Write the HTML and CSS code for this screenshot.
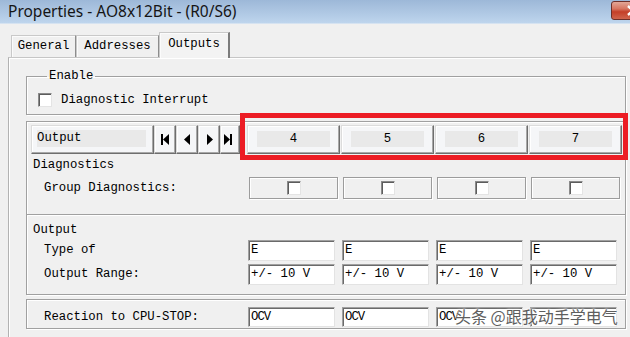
FILE: index.html
```html
<!DOCTYPE html>
<html lang="en">
<head>
  <meta charset="UTF-8" />
  <title>Properties - AO8x12Bit - (R0/S6)</title>
  <link rel="stylesheet" href="styles.css">
</head>
<body>
  <div class="titlebar">
    <span class="title">Properties - AO8x12Bit - (R0/S6)</span>
    <div class="close">
      <svg width="12" height="11" viewBox="0 0 12 11"><path d="M1 1 L11 10 M11 1 L1 10" stroke="#fff" stroke-width="2.4"/></svg>
    </div>
  </div>

  <div class="tabs">
    <div class="tab tab-general">General</div>
    <div class="tab tab-addresses">Addresses</div>
    <div class="tab tab-outputs active">Outputs</div>
  </div>

  <div class="page">
    <fieldset class="enable">
      <legend>Enable</legend>
      <div class="check-row"><span class="check"></span>Diagnostic Interrupt</div>
    </fieldset>

    <div class="box box-a">
      <div class="row nav-row">
        <div class="label-area nav-area">
          <div class="btn output-btn"><span>Output</span></div>
          <div class="btn nav-btn"><svg width="8" height="11" viewBox="0 0 8 11"><rect x="0" y="0" width="2" height="11"/><path d="M8 0 L2 5.5 L8 11 Z"/></svg></div>
          <div class="btn nav-btn"><svg width="7" height="11" viewBox="0 0 7 11"><path d="M6 0 L0 5.5 L6 11 Z"/></svg></div>
          <div class="btn nav-btn"><svg width="7" height="11" viewBox="0 0 7 11"><path d="M1 0 L7 5.5 L1 11 Z"/></svg></div>
          <div class="btn nav-btn last"><svg width="8" height="11" viewBox="0 0 8 11"><path d="M0 0 L6 5.5 L0 11 Z"/><rect x="6" y="0" width="2" height="11"/></svg></div>
        </div>
        <div class="cell"><div class="btn col-btn"><span>4</span></div></div>
        <div class="cell"><div class="btn col-btn"><span>5</span></div></div>
        <div class="cell"><div class="btn col-btn"><span>6</span></div></div>
        <div class="cell"><div class="btn col-btn"><span>7</span></div></div>
      </div>

      <div class="heading">Diagnostics</div>
      <div class="row group-row">
        <div class="label-area sub">Group Diagnostics:</div>
        <div class="cell check-wrap"><div class="check-cell"><span class="check"></span></div></div>
        <div class="cell check-wrap"><div class="check-cell"><span class="check"></span></div></div>
        <div class="cell check-wrap"><div class="check-cell"><span class="check"></span></div></div>
        <div class="cell check-wrap"><div class="check-cell"><span class="check"></span></div></div>
      </div>
    </div>

    <div class="box box-b">
      <div class="heading">Output</div>
      <div class="row field-row">
        <div class="label-area sub">Type of</div>
        <div class="cell"><div class="field">E</div></div>
        <div class="cell"><div class="field">E</div></div>
        <div class="cell"><div class="field">E</div></div>
        <div class="cell"><div class="field">E</div></div>
      </div>
      <div class="row field-row">
        <div class="label-area sub">Output Range:</div>
        <div class="cell"><div class="field">+/- 10 V</div></div>
        <div class="cell"><div class="field">+/- 10 V</div></div>
        <div class="cell"><div class="field">+/- 10 V</div></div>
        <div class="cell"><div class="field">+/- 10 V</div></div>
      </div>
    </div>

    <div class="box box-c">
      <div class="row field-row short">
        <div class="label-area sub">Reaction to CPU-STOP:</div>
        <div class="cell"><div class="field narrow">OCV</div></div>
        <div class="cell"><div class="field narrow">OCV</div></div>
        <div class="cell"><div class="field narrow">OCV</div></div>
        <div class="cell"><div class="field narrow"></div></div>
      </div>
    </div>
  </div>

  <div class="highlight"></div>
  <div class="watermark">头条 @跟我动手学电气</div>
</body>
</html>
```

FILE: styles.css
```css
* {
  box-sizing: border-box;
}

body {
  margin: 0;
  width: 630px;
  height: 337px;
  overflow: hidden;
  position: relative;
  background: #f0f0f0;
  font-family: "Liberation Mono", "DejaVu Sans Mono", monospace;
  font-size: 12.3px;
  line-height: 15px;
  color: #000;
}

/* window title */
.titlebar {
  height: 24px;
  display: flex;
  align-items: center;
  padding-left: 8px;
  background: linear-gradient(#9db8d8, #bed5ed);
  border-bottom: 1px solid #d6e3f1;
}

.title {
  font-family: "Noto Sans", sans-serif;
  font-size: 15.5px;
  color: #151515;
}

.close {
  align-self: flex-start;
  margin: 1px -24px 0 auto;
  width: 43px;
  height: 19px;
  border: 1px solid #6d302a;
  border-radius: 3px;
  background: linear-gradient(#e2a797 0%, #d77560 40%, #c43f28 58%, #d0644c 100%);
  display: flex;
  align-items: center;
  justify-content: center;
}

/* tabs */
.tabs {
  height: 33px;
  display: flex;
  align-items: flex-end;
  padding-left: 11px;
}

.tab {
  height: 22px;
  display: flex;
  align-items: center;
  justify-content: center;
  background: #f0f0f0;
  border: 1px solid #c9c9c9;
  border-bottom: 0;
  border-right: 1px solid #8d8d8d;
  box-shadow: inset 1px 1px 0 #fbfbfb;
}

.tab-general { width: 65px; }
.tab-addresses { width: 83px; }

.tab-outputs {
  width: 71px;
}

.tab.active {
  height: 26px;
  margin-bottom: -1px;
  padding-bottom: 3px;
  position: relative;
  z-index: 1;
  background: #f3f3f3;
  border-right: 2px solid #7c7c7c;
}

/* tab page */
.page {
  height: 280px;
  margin-left: 8px;
  padding-left: 17px;
  border-top: 1px solid #c6c6c6;
  border-left: 1px solid #b2b2b2;
  box-shadow: inset 1px 1px 0 #fff;
}

.enable {
  width: 600px;
  margin: 11px 0 0;
  padding: 9px 11px 7px;
  border: 1px solid #a0a0a0;
  box-shadow: inset 1px 1px 0 #fff, 1px 1px 0 #fff;
}

.enable legend {
  margin-left: 9px;
  padding: 0 2px;
  line-height: 15px;
}

.check-row {
  height: 14px;
  display: flex;
  align-items: center;
  gap: 9px;
}

.check {
  width: 14px;
  height: 14px;
  flex: none;
  background: #fff;
  border: 1px solid;
  border-color: #8a8a8a #e4e4e4 #e4e4e4 #8a8a8a;
  box-shadow: inset 1px 1px 0 #5c5c5c;
}

.box {
  width: 600px;
  border: 1px solid #a0a0a0;
  box-shadow: inset 1px 1px 0 #fff, 1px 1px 0 #fff;
}

.box-a {
  margin-top: 6px;
  padding: 3px 0 15px;
}

.box-b {
  border-top: 0;
  padding: 8px 0 9px;
}

.box-c {
  margin-top: 4px;
  padding: 7px 0 1px;
}

.row {
  display: flex;
  align-items: center;
}

.label-area {
  width: 220px;
  flex: none;
}

.sub {
  padding-left: 17px;
}

.heading {
  padding-left: 6px;
}

.cell {
  width: 94px;
  flex: none;
}

/* buttons */
.btn {
  height: 29px;
  display: flex;
  align-items: center;
  justify-content: center;
  background: #f5f6f8;
  border: 1px solid;
  border-color: #dcdcdc #6e6e6e #6e6e6e #dcdcdc;
  box-shadow: inset -1px -1px 0 #a8a8a8, inset 1px 1px 0 #fff;
}

.btn span {
  flex: 1;
  align-self: stretch;
  display: flex;
  align-items: center;
  background: #e9e9e9;
}

.nav-area {
  display: flex;
  padding-left: 4px;
}

.output-btn {
  width: 123px;
  padding: 4px 7px 6px 5px;
}

.nav-btn {
  width: 22px;
}

.nav-btn.last {
  width: 20px;
  justify-content: flex-start;
  padding-left: 3px;
}

.col-btn {
  width: 93px;
  padding: 5px 9px 6px;
}

.col-btn span {
  justify-content: center;
}

.heading {
  margin-top: 4px;
}

.box-b .heading {
  margin-top: 0;
}

.group-row {
  margin-top: 4px;
}

.check-wrap {
  padding-left: 2px;
}

.check-cell {
  width: 89px;
  height: 22px;
  display: flex;
  align-items: center;
  justify-content: center;
  border: 1px solid #9c9c9c;
  box-shadow: inset 1px 1px 0 #fff, 1px 1px 0 #fff;
}

/* text fields */
.field-row {
  margin-top: 3px;
}

.box-b .heading + .field-row {
  margin-top: 2px;
}

.box-c .field-row {
  margin-top: 0;
}

.cell .field {
  margin-left: 1px;
}

.field {
  width: 87px;
  height: 21px;
  display: flex;
  align-items: center;
  padding-left: 2px;
  background: #fff;
  border: 1px solid;
  border-color: #a0a0a0 #e3e3e3 #e3e3e3 #a0a0a0;
  box-shadow: inset 1px 1px 0 #6a6a6a;
  white-space: pre;
}

.short .field {
  height: 20px;
}

.field.narrow {
  letter-spacing: -1px;
}

/* overlays */
.highlight {
  position: absolute;
  left: 240px;
  top: 113px;
  width: 388px;
  height: 47px;
  border: 5px solid #ec1c24;
}

.watermark {
  position: absolute;
  left: 455px;
  top: 306px;
  font-family: "Noto Sans CJK SC", sans-serif;
  font-size: 16px;
  line-height: 20px;
  color: #5e5e5e;
  white-space: pre;
  text-shadow: 0 0 2px #fff, 0 0 2px #fff, 0 0 3px #fff;
}
```
